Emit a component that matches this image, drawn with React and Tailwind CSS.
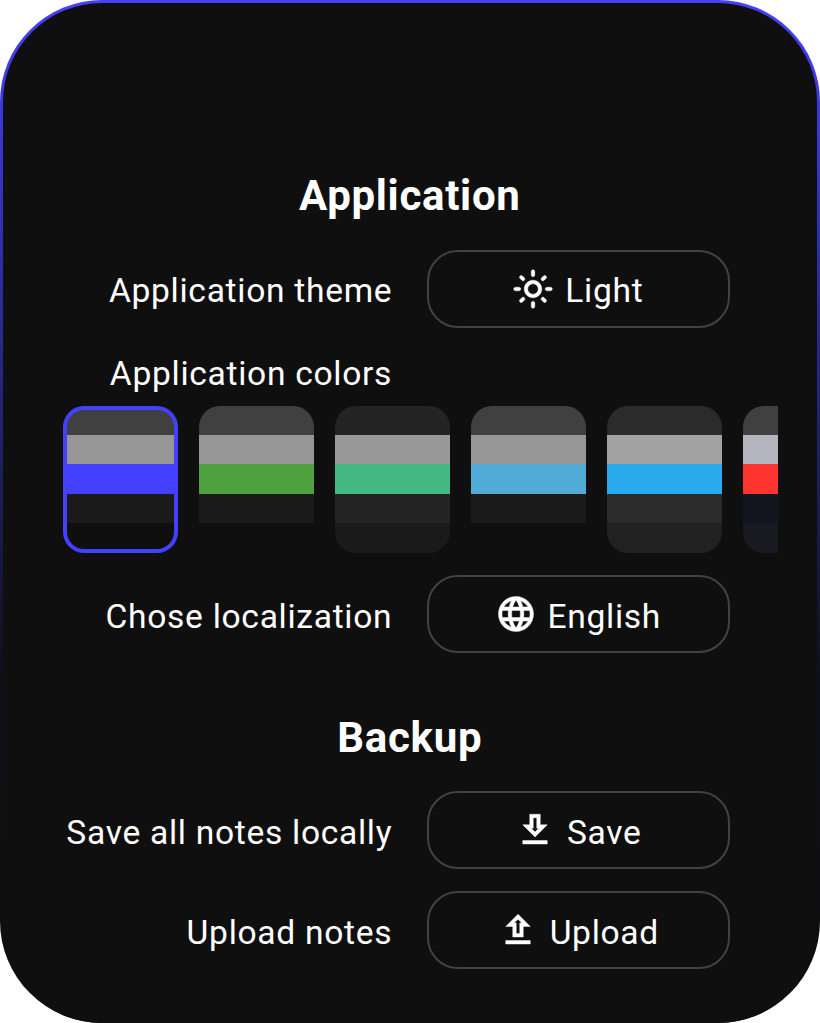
import { MdOutlineLightMode, MdLanguage } from "react-icons/md";

const swatches = [
  { selected: true, bands: ["bg-[#404040]", "bg-[#969696]", "bg-[#4440ff]", "bg-[#1a1a1a]", "bg-[#0f0f0f]"] },
  { bands: ["bg-[#404040]", "bg-[#969696]", "bg-[#4fa03e]", "bg-[#1a1a1a]", "bg-[#0f0f0f]"] },
  { bands: ["bg-[#242424]", "bg-[#989898]", "bg-[#44b883]", "bg-[#242424]", "bg-[#1a1a1a]"] },
  { bands: ["bg-[#404040]", "bg-[#969696]", "bg-[#50abd7]", "bg-[#1a1a1a]", "bg-[#0f0f0f]"] },
  { bands: ["bg-[#2b2b2b]", "bg-[#a2a2a2]", "bg-[#2aabee]", "bg-[#2b2b2b]", "bg-[#212121]"] },
  { bands: ["bg-[#404040]", "bg-[#b4b4be]", "bg-[#fc342d]", "bg-[#12151d]", "bg-[#181a22]"] },
];

// The Material icons carry an unfilled bounding path, which must stay unstroked.
const iconClass = "size-[42px] stroke-current stroke-[0.25] [&>path[fill=none]]:stroke-none";

function SaveIcon() {
  return (
    <svg viewBox="0 0 24 24" className={iconClass} fill="currentColor">
      <path d="M19 9h-4V3H9v6H5l7 7 7-7zm-8 2V5h2v6h1.17L12 13.17 9.83 11H11zm-6 7h14v2H5z" />
    </svg>
  );
}

function UploadIcon() {
  return (
    <svg viewBox="0 0 24 24" className={iconClass} fill="currentColor">
      <path d="M9 16h6v-6h4l-7-7-7 7h4v6zm3-10.17L14.17 8H13v6h-2V8H9.83L12 5.83zM5 18h14v2H5z" />
    </svg>
  );
}

function Row({ label, icon, value, textPad = "pt-[5px]" }) {
  return (
    <div className="flex h-[78px] items-center">
      <span className={"w-[393px] pr-[0.7px] text-right whitespace-nowrap " + textPad}>{label}</span>
      <button className="ml-[34px] flex h-[78px] w-[303px] items-center justify-center gap-[11px] rounded-[31px] border-2 border-[#424242] pr-[1.4px]">
        {icon}
        <span className={textPad}>{value}</span>
      </button>
    </div>
  );
}

function Heading({ children }) {
  return <h2 className="pr-[0.5px] text-center text-[42px] leading-[50px] font-bold">{children}</h2>;
}

export default function App() {
  return (
    <div className="h-[1023px] w-[820px] overflow-hidden bg-white">
      <div className="h-full rounded-[102px] bg-linear-to-b/srgb from-[#4440ff] from-0% via-[#0f0f19] via-66% to-[#0f0f0f] to-95% p-[3px] pb-0">
        <main className="h-full rounded-[99px] bg-[#0f0f0f] font-[Roboto,sans-serif] text-[33.6px] leading-[40px] tracking-[0.7px] text-white">
          <div className="-mx-[3px] pt-[168px]">
            <Heading>Application</Heading>
            <div className="mt-[29px]">
              <Row
                label="Application theme"
                icon={<MdOutlineLightMode className={iconClass} />}
                value="Light"
                textPad="pt-[3px]"
              />
            </div>
            <div className="mt-[26px] w-[393px] pr-[0.9px] text-right">Application colors</div>
            <div className="mt-[12px] ml-[63px] flex w-[715px] gap-[21px] overflow-hidden">
              {swatches.map(({ bands, selected }, i) => (
                <div
                  key={i}
                  className={
                    "flex h-[147px] w-[115px] shrink-0 overflow-hidden rounded-[21px] " +
                    (selected ? "bg-[#4440ff] p-[4.3px]" : "")
                  }
                >
                  <div
                    className={
                      "grid flex-1 overflow-hidden " +
                      (selected ? "grid-rows-[25px_29px_30px_29px_1fr] rounded-[17px]" : "grid-rows-[29px_29px_30px_29px_30px]")
                    }
                  >
                    {bands.map((band, j) => (
                      <div key={j} className={band} />
                    ))}
                  </div>
                </div>
              ))}
            </div>
            <div className="mt-[22px]">
              <Row label="Chose localization" icon={<MdLanguage className={iconClass} />} value="English" />
            </div>
            <div className="mt-[60px]">
              <Heading>Backup</Heading>
            </div>
            <div className="mt-[28px] flex flex-col gap-[22px]">
              <Row label="Save all notes locally" icon={<SaveIcon />} value="Save" />
              <Row label="Upload notes" icon={<UploadIcon />} value="Upload" />
            </div>
          </div>
        </main>
      </div>
    </div>
  );
}
